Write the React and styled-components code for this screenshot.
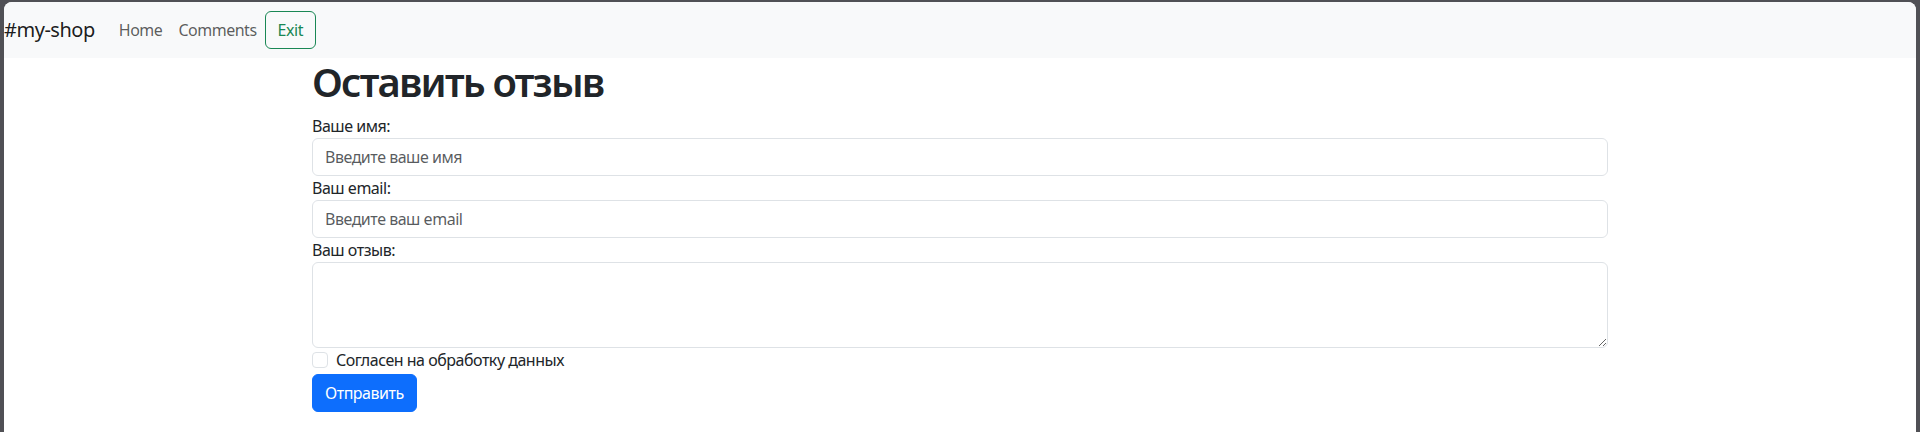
import styled, { createGlobalStyle } from "styled-components";

const GlobalStyle = createGlobalStyle`
  html, body {
    margin: 0;
    padding: 0;
    background: #505055;
  }
  body {
    font-family: "Segoe UI", "Noto Sans", "Liberation Sans", sans-serif;
    font-size: 16px;
    line-height: 1.5;
    letter-spacing: -0.03em;
    color: #212529;
  }
  * {
    box-sizing: border-box;
  }
`;

const Frame = styled.div`
  padding: 2px 4px 0 4px;
  height: 432px;
  background: #505055;
`;

const Page = styled.div`
  background: #fff;
  height: 100%;
  border-radius: 8px 8px 0 0;
  overflow: hidden;
`;

const Navbar = styled.nav`
  display: flex;
  align-items: center;
  height: 56px;
  padding: 8px 0;
  background: #f8f9fa;
`;

const Brand = styled.a`
  font-size: 20px;
  line-height: 30px;
  padding: 5px 0;
  margin-right: 16px;
  color: rgba(0, 0, 0, 0.9);
  text-decoration: none;
`;

const NavList = styled.ul`
  display: flex;
  align-items: center;
  list-style: none;
  margin: 0;
  padding: 0;
`;

const NavLink = styled.a`
  display: block;
  padding: 8px;
  color: rgba(0, 0, 0, 0.65);
  text-decoration: none;
`;

const OutlineButton = styled.button`
  font: inherit;
  letter-spacing: inherit;
  height: 38px;
  padding: 6px 12px;
  border: 1px solid #198754;
  border-radius: 6px;
  background: transparent;
  color: #198754;
  cursor: pointer;
`;

const Container = styled.main`
  max-width: 1320px;
  margin: 0 auto;
  padding: 0 12px;
`;

const Title = styled.h1`
  margin: 0 0 8px;
  font-size: 40px;
  font-weight: 600;
  line-height: 1.2;
  letter-spacing: -0.045em;
`;

const Label = styled.label`
  display: block;
`;

const Input = styled.input`
  display: block;
  width: 100%;
  height: 38px;
  padding: 6px 12px;
  font: inherit;
  letter-spacing: inherit;
  color: #212529;
  border: 1px solid #dee2e6;
  border-radius: 6px;
  background: #fff;

  &::placeholder {
    color: rgba(33, 37, 41, 0.75);
  }
`;

const TextArea = styled.textarea`
  display: block;
  width: 100%;
  height: 86px;
  padding: 6px 12px;
  font: inherit;
  color: #212529;
  border: 1px solid #dee2e6;
  border-radius: 6px;
  resize: vertical;
`;

const Check = styled.div`
  display: flex;
  align-items: flex-start;
  gap: 8px;
  min-height: 24px;
  margin-bottom: 2px;
`;

const CheckBox = styled.input`
  appearance: none;
  width: 16px;
  height: 16px;
  margin: 4px 0 0;
  border: 1px solid #dee2e6;
  border-radius: 4px;
  background: #fff;
`;

const PrimaryButton = styled.button`
  font: inherit;
  letter-spacing: inherit;
  height: 38px;
  padding: 6px 12px;
  border: 1px solid #0d6efd;
  border-radius: 6px;
  background: #0d6efd;
  color: #fff;
  cursor: pointer;
`;

export default function App() {
  return (
    <>
      <GlobalStyle />
      <Frame>
        <Page>
          <Navbar>
            <Brand href="#">#my-shop</Brand>
            <NavList>
              <li>
                <NavLink href="#">Home</NavLink>
              </li>
              <li>
                <NavLink href="#">Comments</NavLink>
              </li>
              <li>
                <OutlineButton>Exit</OutlineButton>
              </li>
            </NavList>
          </Navbar>
          <Container>
            <Title>Оставить отзыв</Title>
            <form onSubmit={(e) => e.preventDefault()}>
              <Label htmlFor="name">Ваше имя:</Label>
              <Input id="name" placeholder="Введите ваше имя" />
              <Label htmlFor="email">Ваш email:</Label>
              <Input id="email" type="email" placeholder="Введите ваш email" />
              <Label htmlFor="review">Ваш отзыв:</Label>
              <TextArea id="review" rows={3} />
              <Check>
                <CheckBox type="checkbox" id="agree" />
                <label htmlFor="agree">Согласен на обработку данных</label>
              </Check>
              <PrimaryButton type="submit">Отправить</PrimaryButton>
            </form>
          </Container>
        </Page>
      </Frame>
    </>
  );
}
